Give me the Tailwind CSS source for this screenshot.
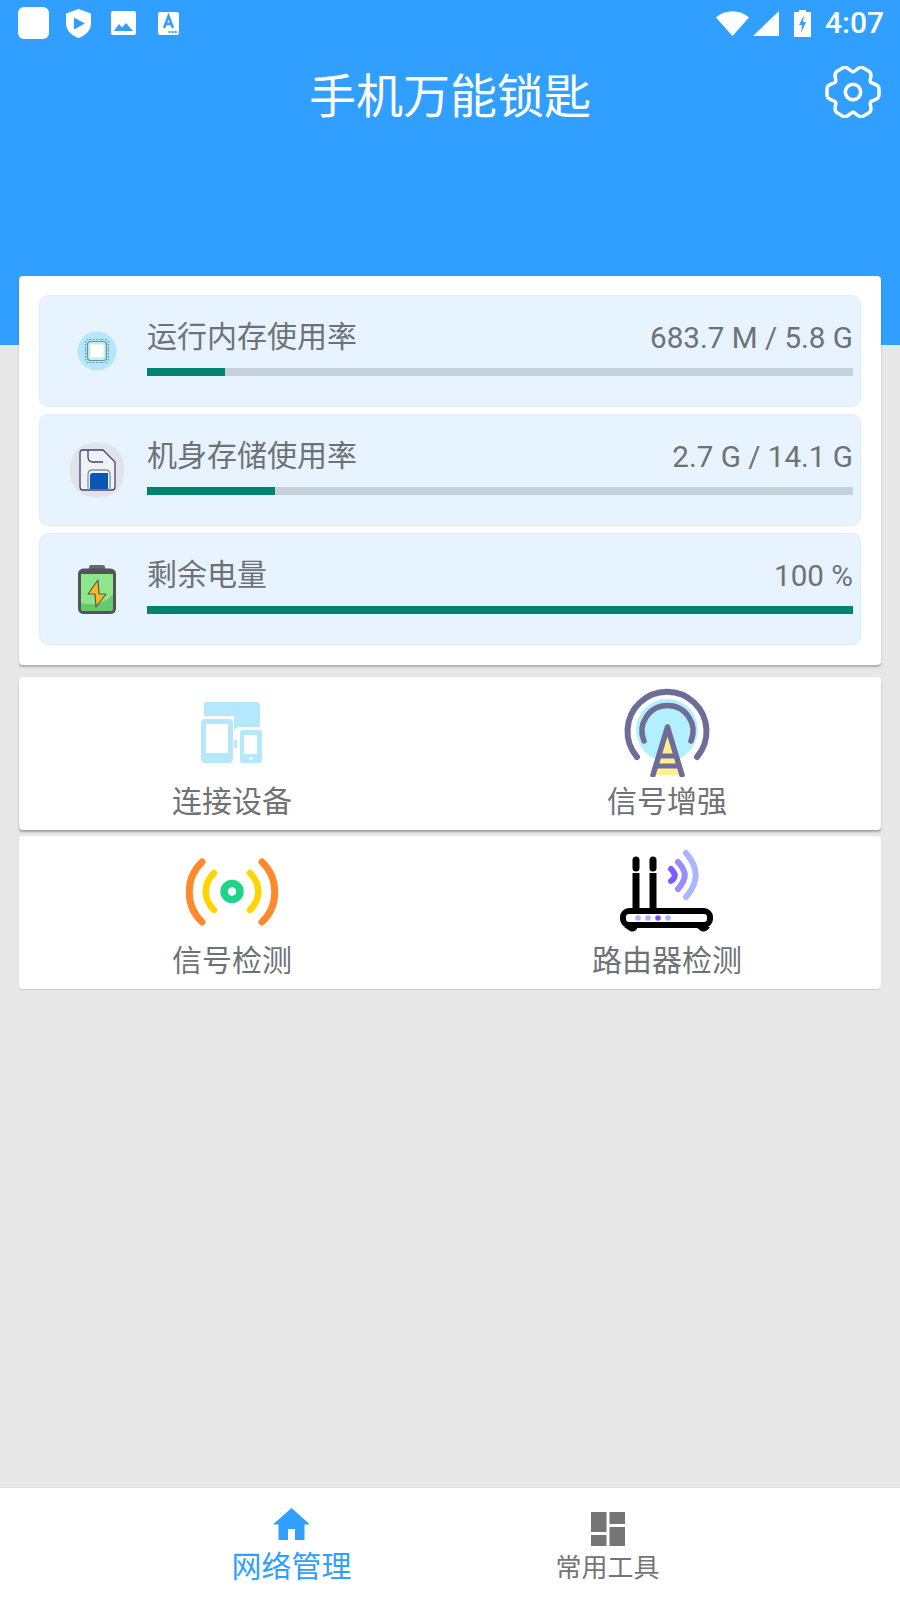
<!DOCTYPE html>
<html lang="zh-CN">
<head>
    <meta charset="UTF-8">
    <meta name="viewport" content="width=device-width, initial-scale=1.0">
    <title>手机万能锁匙</title>
    <script src="https://cdn.jsdelivr.net/npm/@tailwindcss/browser@4"></script>
</head>
<body class="bg-[#e7e7e7] font-['Roboto','Noto_Sans_CJK_SC',sans-serif]">
<div class="w-[900px] h-[1600px] flex flex-col overflow-hidden">

    <!-- Blue header -->
    <header class="h-[345px] bg-[#309fff] text-white shrink-0">
        <div class="h-[46px] flex items-center relative">
            <div class="w-[31px] h-[32px] bg-white rounded-[6px] ml-[18px]"></div>
            <svg class="w-[25px] h-[29px] ml-[17px]" viewBox="0 0 25 29"><path fill="#fff" d="M12.500 0 25 4.500V14c0 7-5 12.500-12.500 15C5 26.500 0 21 0 14V4.500Z"/><path fill="#309fff" d="M8 8.500 19 14.500 8 20.500Z"/></svg>
            <svg class="w-[25px] h-[24px] ml-[20px]" viewBox="0 0 25 24"><rect width="25" height="24" rx="2" fill="#fff"/><path fill="#309fff" d="M3 20 8 13 11 16.500 15 12 22 20Z"/></svg>
            <svg class="w-[21px] h-[23px] ml-[22px]" viewBox="0 0 21 23"><rect width="21" height="23" rx="2" fill="#fff"/><path fill="none" stroke="#309fff" stroke-width="2.500" d="M6 16 10.500 4 15 16M7.500 12H13.500"/><path stroke="#309fff" stroke-width="2" stroke-dasharray="2 1" d="M10.500 20H20"/></svg>
            <div class="ml-auto flex items-center mr-[16px]">
                <svg class="w-[33px] h-[25px]" viewBox="0 0 33 25"><path fill="#fff" d="M0 6.500C9-2 24-2 33 6.500L16.500 25Z"/></svg>
                <svg class="w-[26px] h-[25px] ml-[4px]" viewBox="0 0 26 25"><path fill="#fff" d="M26 0V25H0Z"/></svg>
                <svg class="w-[17px] h-[27px] ml-[15px]" viewBox="0 0 17 27"><path fill="#fff" d="M5 0H12V2H17V27H0V2H5Z"/><path fill="#309fff" d="M10 5 5 15H8L7 23 12 12H9Z"/></svg>
                <span class="text-[30px] font-medium leading-none ml-[14px]">4:07</span>
            </div>
        </div>
        <div class="h-[72px] flex items-center justify-center relative">
            <h1 class="text-[47px] leading-none font-normal mt-[28px]">手机万能锁匙</h1>
            <svg class="absolute right-[19px] top-[20px] w-[56px] h-[52px]" viewBox="-29 -27 58 54" fill="none" stroke="#fff" stroke-width="3.600" stroke-linecap="round">
                <circle r="8"/>
                <path d="M18.200 -10.500C19.700 -7.900 27 -9 27 -3.500V3.500C27 9 19.700 7.900 18.200 10.500"/>
                <path transform="rotate(60)" d="M18.200 -10.500C19.700 -7.900 27 -9 27 -3.500V3.500C27 9 19.700 7.900 18.200 10.500"/>
                <path transform="rotate(120)" d="M18.200 -10.500C19.700 -7.900 27 -9 27 -3.500V3.500C27 9 19.700 7.900 18.200 10.500"/>
                <path transform="rotate(180)" d="M18.200 -10.500C19.700 -7.900 27 -9 27 -3.500V3.500C27 9 19.700 7.900 18.200 10.500"/>
                <path transform="rotate(240)" d="M18.200 -10.500C19.700 -7.900 27 -9 27 -3.500V3.500C27 9 19.700 7.900 18.200 10.500"/>
                <path transform="rotate(300)" d="M18.200 -10.500C19.700 -7.900 27 -9 27 -3.500V3.500C27 9 19.700 7.900 18.200 10.500"/>
            </svg>
        </div>
    </header>

    <main class="flex-1 -mt-[69px] px-[19px] flex flex-col text-[#6e7276]">

        <!-- Usage card -->
        <section class="h-[389px] bg-white rounded-[4px] shadow-[0_2px_2px_rgba(0,0,0,0.25)] px-[20px] pt-[19px] flex flex-col gap-[7px]">
            <div class="h-[112px] bg-[#e7f3ff] border border-[#e0eefc] rounded-[9px] flex pl-[29px] pr-[7px]">
                <div class="w-[78px] h-full flex items-center">
                    <svg class="w-[40px] h-[40px] ml-[8px]" viewBox="0 0 40 40">
                        <circle cx="20" cy="20" r="19.500" fill="#b5e6fb"/>
                        <path stroke="#5f93a6" stroke-width="1.200" stroke-dasharray="1.500 1.500" fill="none" d="M10 8.500H30M10 31.500H30M8.500 10V30M31.500 10V30"/>
                        <rect x="10.500" y="10.500" width="19" height="19" rx="3" fill="#c9eee0" stroke="#5f93a6" stroke-width="1.200"/>
                        <rect x="13.500" y="13.500" width="13" height="13" fill="#fff"/>
                    </svg>
                </div>
                <div class="flex-1 flex flex-col">
                    <div class="flex items-center justify-between h-[44px] mt-[19px] text-[30px] leading-none">
                        <span>运行内存使用率</span>
                        <span class="text-[29.6px] mt-[3px]">683.7 M / 5.8 G</span>
                    </div>
                    <div class="h-[8px] mt-[9px] bg-[#c5d0d8]"><div class="h-full bg-[#00836f] w-[78px]"></div></div>
                </div>
            </div>
            <div class="h-[112px] bg-[#e7f3ff] border border-[#e0eefc] rounded-[9px] flex pl-[29px] pr-[7px]">
                <div class="w-[78px] h-full flex items-center">
                    <svg class="w-[54px] h-[54px] ml-[1px]" viewBox="0 0 54 54">
                        <rect width="54" height="54" rx="24" fill="#e0e4ea"/>
                        <path fill="#eef1f6" stroke="#3b4568" stroke-width="1.300" stroke-linejoin="round" d="M12 7H33L45 19V44Q45 47 42 47H13Q10 47 10 44V10Q10 7 13 7Z"/>
                        <path fill="none" stroke="#3b4568" stroke-width="1.300" d="M18 7V14Q18 19 23 19H33"/>
                        <path fill="none" stroke="#8290ad" stroke-width="1.300" d="M18 47V32Q18 27 22 27H36Q40 27 40 32V47"/>
                        <path fill="#0a56b4" d="M20 46V33Q20 30 23 30H38V46Z"/>
                    </svg>
                </div>
                <div class="flex-1 flex flex-col">
                    <div class="flex items-center justify-between h-[44px] mt-[19px] text-[30px] leading-none">
                        <span>机身存储使用率</span>
                        <span class="text-[29.6px] mt-[3px]">2.7 G / 14.1 G</span>
                    </div>
                    <div class="h-[8px] mt-[9px] bg-[#c5d0d8]"><div class="h-full bg-[#00836f] w-[128px]"></div></div>
                </div>
            </div>
            <div class="h-[112px] bg-[#e7f3ff] border border-[#e0eefc] rounded-[9px] flex pl-[29px] pr-[7px]">
                <div class="w-[78px] h-full flex items-center">
                    <svg class="w-[38px] h-[50px] ml-[9px]" viewBox="0 0 38 50">
                        <rect x="11" y="1" width="16" height="7" rx="2" fill="#6b6770"/>
                        <rect x="1.500" y="6" width="35" height="42.500" rx="4" fill="#8ee68c" stroke="#56525c" stroke-width="3"/>
                        <path fill="#66c96f" d="M3 42V39C14 42 28 40 35 30V44Q35 47 32 47H6Q3 47 3 44Z"/>
                        <path fill="#56525c" d="M2 6H36V10H2Z"/>
                        <path fill="#ffb81c" stroke="#5a5660" stroke-width="1.200" stroke-linejoin="round" d="M20 16 10 30H17L18 43 28 30H21Z"/>
                    </svg>
                </div>
                <div class="flex-1 flex flex-col">
                    <div class="flex items-center justify-between h-[44px] mt-[19px] text-[30px] leading-none">
                        <span>剩余电量</span>
                        <span class="text-[29.6px] mt-[3px]">100 %</span>
                    </div>
                    <div class="h-[8px] mt-[9px] bg-[#00836f]"></div>
                </div>
            </div>
        </section>

        <!-- Function cards -->
        <section class="h-[153px] mt-[12px] bg-white rounded-[4px] shadow-[0_2px_2px_rgba(0,0,0,0.3)] flex">
            <div class="w-[434px] shrink-0 -ml-[4px] flex flex-col items-center">
                <svg class="w-[70px] h-[78px] mt-[21px]" viewBox="197 698 70 78" fill="#b5e7fd">
                    <path d="M206 702H255Q260 702 260 707V727H240Q234 727 234 733V716H204V704Q204 702 206 702Z"/>
                    <path fill-rule="evenodd" d="M205 719H229Q233 719 233 723V759Q233 763 229 763H205Q201 763 201 759V723Q201 719 205 719ZM206 724V753H228V724Z"/>
                    <rect x="234" y="740" width="3" height="8"/>
                    <path fill-rule="evenodd" d="M243 730H259Q262 730 262 733V760Q262 763 259 763H243Q240 763 240 760V733Q240 730 243 730ZM244 735V754H257V735ZM251 757A1.500 1.500 0 1 0 251.100 757Z"/>
                </svg>
                <span class="text-[30px] leading-none mt-[11px]">连接设备</span>
            </div>
            <div class="w-[434px] shrink-0 ml-[1px] flex flex-col items-center">
                <svg class="w-[90px] h-[90px] mt-[10px]" viewBox="622 687 90 90" fill="none">
                    <circle cx="667" cy="730" r="31" fill="#b3f0ff"/>
                    <path stroke="#6e6c99" stroke-width="6" stroke-linecap="round" d="M637 757A39.500 39.500 0 1 1 697 757"/>
                    <path stroke="#6e6c99" stroke-width="5.500" stroke-linecap="round" d="M644 741A25.500 25.500 0 1 1 691 741"/>
                    <path fill="#fff08c" d="M667.500 734 679 775H656Z"/>
                    <path stroke="#6e6c99" stroke-width="5" d="M659 756H676M655 766H680"/>
                    <path stroke="#6e6c99" stroke-width="5.500" stroke-linecap="round" d="M667.500 727 653 775M667.500 727 682 775"/>
                </svg>
                <span class="text-[30px] leading-none mt-[10px]">信号增强</span>
            </div>
        </section>
        <section class="h-[153px] mt-[6px] bg-white rounded-[4px] shadow-[0_1px_1px_rgba(0,0,0,0.12)] flex">
            <div class="w-[434px] shrink-0 -ml-[4px] flex flex-col items-center">
                <svg class="w-[100px] h-[72px] mt-[19px]" viewBox="182 855 100 72" fill="none" stroke-linecap="round">
                    <path stroke="#ff8a2b" stroke-width="7" d="M202 862C185 878 185 906 202 922"/>
                    <path stroke="#ffd500" stroke-width="6.500" d="M214 873C203 884 203 899 214 910"/>
                    <circle cx="232" cy="891.500" r="8" stroke="#1fd38a" stroke-width="7.500"/>
                    <path stroke="#ffd500" stroke-width="6.500" d="M250 873C261 884 261 899 250 910"/>
                    <path stroke="#ff8a2b" stroke-width="7" d="M262 862C279 878 279 906 262 922"/>
                </svg>
                <span class="text-[30px] leading-none mt-[19px]">信号检测</span>
            </div>
            <div class="w-[434px] shrink-0 ml-[1px] flex flex-col items-center">
                <svg class="w-[96px] h-[86px] mt-[13px]" viewBox="619 849 96 86" fill="none" stroke-linecap="round">
                    <path stroke="#000" stroke-width="7" d="M636 860V868M653 860V868"/>
                    <path stroke="#000" stroke-width="7" stroke-linecap="butt" d="M636 873V911M653 873V911"/>
                    <rect x="623" y="911" width="87" height="14" rx="6" fill="#fff" stroke="#000" stroke-width="6"/>
                    <path fill="#000" stroke="none" d="M624 927H638Q635 933 630 931ZM696 927H710Q706 933 701 931Z"/>
                    <circle cx="638" cy="918" r="2.800" fill="#a9b6ff"/>
                    <circle cx="648" cy="918" r="2.800" fill="#a9b6ff"/>
                    <circle cx="658" cy="918" r="2.800" fill="#7c4dff"/>
                    <circle cx="668" cy="918" r="2.800" fill="#a9b6ff"/>
                    <path stroke="#7c5cff" stroke-width="6" d="M671 869C676 874 676 877 671 881"/>
                    <path stroke="#9a8cff" stroke-width="6" d="M678 862C687 872 687 878 678 889"/>
                    <path stroke="#a8b8ff" stroke-width="6" d="M686 853C699 868 699 882 686 897"/>
                </svg>
                <span class="text-[30px] leading-none mt-[11px]">路由器检测</span>
            </div>
        </section>
    </main>

    <!-- Bottom tabs -->
    <nav class="h-[113px] bg-white shrink-0 flex pl-[134px] border-t border-[#dfdfdf]">
        <a class="w-[315px] flex flex-col items-center text-[#309fff]">
            <svg class="w-[37px] h-[32px] mt-[20px]" viewBox="0 0 37 32"><path fill="#309fff" d="M18.500 0 37 16.500H31.500V32H22V21H15V32H5.500V16.500H0Z"/></svg>
            <span class="text-[30px] leading-none mt-[12px]">网络管理</span>
        </a>
        <a class="w-[315px] ml-[1px] flex flex-col items-center text-[#757575]">
            <svg class="w-[34px] h-[34px] mt-[24px]" viewBox="0 0 34 34"><path fill="#757575" d="M0 0H15.500V20H0ZM18.500 0H34V12H18.500ZM18.500 15H34V34H18.500ZM0 23H15.500V34H0Z"/></svg>
            <span class="text-[26px] leading-none mt-[9px]">常用工具</span>
        </a>
    </nav>
</div>
</body>
</html>
